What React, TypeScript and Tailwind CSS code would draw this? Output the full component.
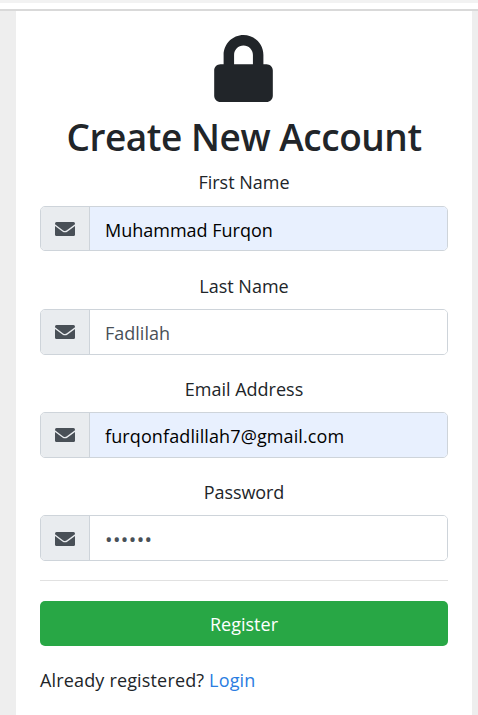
import { FaLock } from "react-icons/fa";

type FieldProps = {
  label: string;
  value?: string;
  placeholder?: string;
  inputClass: string;
  rowClass: string;
  labelClass?: string;
  iconClass?: string;
};

function Envelope() {
  return (
    <svg width="20" height="14" viewBox="0 0 20 14" fill="none">
      <rect width="20" height="14" rx="1.5" fill="currentColor" />
      <path
        d="M-0.5 2.8 L7.8 8.9 Q10 10.5 12.2 8.9 L20.5 2.8"
        className="stroke-[#e9ecef]"
        strokeWidth="1.3"
        strokeLinejoin="round"
      />
    </svg>
  );
}

function Field({ label, value, placeholder, inputClass, rowClass, labelClass = "", iconClass = "" }: FieldProps) {
  return (
    <div className="flex flex-col">
      <label className={`h-[30px] text-center leading-[30px] ${labelClass}`}>{label}</label>
      <div className={`flex w-full overflow-hidden rounded-[5px] border border-[#ced4da] ${rowClass}`}>
        <span
          className={`flex w-[49px] shrink-0 justify-center border-r border-[#ced4da] bg-[#e9ecef] text-[#495057] ${iconClass}`}
        >
          <Envelope />
        </span>
        <input
          type="text"
          defaultValue={value}
          placeholder={placeholder}
          className={`min-w-0 flex-1 pl-[15px] outline-none placeholder:text-[#495057] placeholder:opacity-100 ${inputClass}`}
        />
      </div>
    </div>
  );
}

export default function App() {
  return (
    <div className="flex h-[715px] w-[478px] flex-col overflow-hidden bg-[#eeeeee] font-['Open_Sans','Noto_Sans',sans-serif] text-[18px] text-[#212529]">
      <div className="h-[3px] shrink-0 bg-[#f2f2f2]" />
      <div className="h-2 shrink-0 border-b-2 border-[#d9d9d9] bg-white" />
      <main className="ml-4 flex w-[456px] flex-1 flex-col bg-white px-6">
        <FaLock className="mt-[24.4px] mr-px h-[67px] w-[59px] shrink-0 self-center" />
        <h1 className="mt-[9.6px] h-[50px] text-center text-[37px] leading-[50px] font-semibold tracking-[-0.45px] whitespace-nowrap">
          Create New Account
        </h1>
        <form className="mt-[5px] flex flex-col">
          <Field
            label="First Name"
            value="Muhammad Furqon"
            inputClass="bg-[#e8f0fe] text-black pt-[5px]"
            rowClass="mt-[9px] h-[45px]"
            iconClass="pt-[15px]"
          />
          <div className="h-5" />
          <Field
            label="Last Name"
            placeholder="Fadlilah"
            inputClass="bg-white pt-[3px]"
            rowClass="mt-2 h-[46px]"
            iconClass="pt-[15px]"
          />
          <div className="h-[19px]" />
          <Field
            label="Email Address"
            value="furqonfadlillah7@gmail.com"
            inputClass="bg-[#e8f0fe] text-black tracking-[0.11px] pt-[3px]"
            rowClass="mt-2 h-[46px]"
            iconClass="pt-[15px]"
          />
          <div className="h-[19px]" />
          <Field
            label="Password"
            placeholder="••••••"
            inputClass="bg-white text-[20px] tracking-[0.4px] pt-[5px]"
            rowClass="mt-2 h-[46px]"
            labelClass="tracking-[-0.1px]"
            iconClass="pt-4"
          />
          <hr className="mt-[19px] border-t border-[#e1e1e1]" />
          <button type="button" className="mt-5 h-[45px] rounded-[5px] bg-[#28a745] pt-0.5 text-white">
            Register
          </button>
          <p className="mt-[19px] leading-[30px] tracking-[0.16px]">
            Already registered? <a className="text-[#2b7de1]">Login</a>
          </p>
        </form>
      </main>
    </div>
  );
}
